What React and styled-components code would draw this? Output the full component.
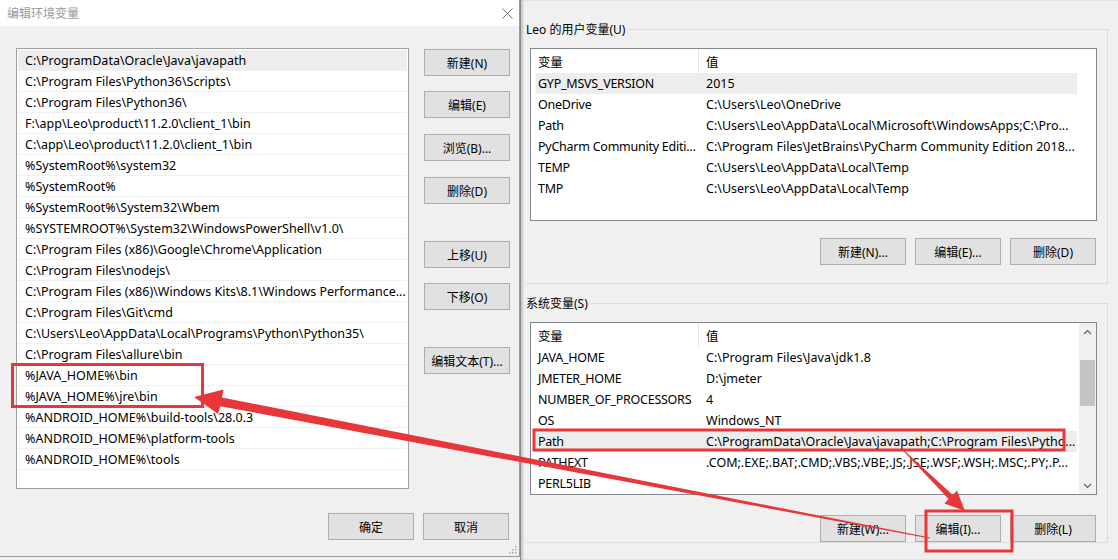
import React from 'react';
import styled, { createGlobalStyle } from 'styled-components';

const GlobalStyle = createGlobalStyle`
  html, body {
    margin: 0;
    padding: 0;
    background: #f0f0f0;
  }
  body {
    font-family: "Noto Sans", "Noto Sans CJK SC", sans-serif;
    font-size: 12px;
    color: #000;
  }
`

const pathItems = [
  'C:\\ProgramData\\Oracle\\Java\\javapath',
  'C:\\Program Files\\Python36\\Scripts\\',
  'C:\\Program Files\\Python36\\',
  'F:\\app\\Leo\\product\\11.2.0\\client_1\\bin',
  'C:\\app\\Leo\\product\\11.2.0\\client_1\\bin',
  '%SystemRoot%\\system32',
  '%SystemRoot%',
  '%SystemRoot%\\System32\\Wbem',
  '%SYSTEMROOT%\\System32\\WindowsPowerShell\\v1.0\\',
  'C:\\Program Files (x86)\\Google\\Chrome\\Application',
  'C:\\Program Files\\nodejs\\',
  'C:\\Program Files (x86)\\Windows Kits\\8.1\\Windows Performance...',
  'C:\\Program Files\\Git\\cmd',
  'C:\\Users\\Leo\\AppData\\Local\\Programs\\Python\\Python35\\',
  'C:\\Program Files\\allure\\bin',
  '%JAVA_HOME%\\bin',
  '%JAVA_HOME%\\jre\\bin',
  '%ANDROID_HOME%\\build-tools\\28.0.3',
  '%ANDROID_HOME%\\platform-tools',
  '%ANDROID_HOME%\\tools',
]

const sideButtons = [
  { label: '新建(N)', gap: 1 },
  { label: '编辑(E)', gap: 15 },
  { label: '浏览(B)...', gap: 16 },
  { label: '删除(D)', gap: 16 },
  { label: '上移(U)', gap: 37 },
  { label: '下移(O)', gap: 15 },
  { label: '编辑文本(T)...', gap: 37 },
]

const userVars = [
  ['GYP_MSVS_VERSION', '2015', true],
  ['OneDrive', 'C:\\Users\\Leo\\OneDrive'],
  ['Path', 'C:\\Users\\Leo\\AppData\\Local\\Microsoft\\WindowsApps;C:\\Pro...'],
  ['PyCharm Community Editi...', 'C:\\Program Files\\JetBrains\\PyCharm Community Edition 2018...'],
  ['TEMP', 'C:\\Users\\Leo\\AppData\\Local\\Temp'],
  ['TMP', 'C:\\Users\\Leo\\AppData\\Local\\Temp'],
]

const sysVars = [
  ['JAVA_HOME', 'C:\\Program Files\\Java\\jdk1.8'],
  ['JMETER_HOME', 'D:\\jmeter'],
  ['NUMBER_OF_PROCESSORS', '4'],
  ['OS', 'Windows_NT'],
  ['Path', 'C:\\ProgramData\\Oracle\\Java\\javapath;C:\\Program Files\\Pytho...', true],
  ['PATHEXT', '.COM;.EXE;.BAT;.CMD;.VBS;.VBE;.JS;.JSE;.WSF;.WSH;.MSC;.PY;.P...'],
  ['PERL5LIB', ''],
]

function VarTable({ rows, scroll }) {
  return (
    <TableBox>
      <TableContent>
        <HeadRow>
          <NameCell $head>变量</NameCell>
          <ValueCell>值</ValueCell>
        </HeadRow>
        {rows.map(([name, value, active]) => (
          <VarRow key={name} $active={active}>
            <NameCell>{name}</NameCell>
            <ValueCell>{value}</ValueCell>
          </VarRow>
        ))}
      </TableContent>
      {scroll && (
        <ScrollBar>
          <ScrollArrow>
            <svg width="9" height="6" viewBox="0 0 9 6">
              <path d="M1 5 L4.5 1.5 L8 5" fill="none" stroke="#606060" strokeWidth="1.2" />
            </svg>
          </ScrollArrow>
          <ScrollTrack>
            <ScrollThumb />
          </ScrollTrack>
          <ScrollArrow>
            <svg width="9" height="6" viewBox="0 0 9 6">
              <path d="M1 1 L4.5 4.5 L8 1" fill="none" stroke="#606060" strokeWidth="1.2" />
            </svg>
          </ScrollArrow>
        </ScrollBar>
      )}
    </TableBox>
  )
}

export default function App() {
  return (
    <>
      <GlobalStyle />
      <Screen>
        <EditDialog>
          <TitleBar>
            <Title>编辑环境变量</Title>
            <svg width="11" height="11" viewBox="0 0 11 11">
              <path d="M0.5 0.5 L10.5 10.5 M10.5 0.5 L0.5 10.5" stroke="#707070" strokeWidth="1" />
            </svg>
          </TitleBar>
          <DialogBody>
            <PathList>
              {pathItems.map((item, i) => (
                <PathRow key={item} $active={i === 0}>{item}</PathRow>
              ))}
            </PathList>
            <SideColumn>
              {sideButtons.map((b) => (
                <WinButton key={b.label} $gap={b.gap}>{b.label}</WinButton>
              ))}
            </SideColumn>
          </DialogBody>
          <DialogFooter>
            <WinButton>确定</WinButton>
            <WinButton>取消</WinButton>
          </DialogFooter>
          <Grip width="8" height="8" viewBox="0 0 8 8">
            <g fill="#a8a8a8">
              <rect x="6" y="0" width="1.5" height="1.5" />
              <rect x="3" y="3" width="1.5" height="1.5" />
              <rect x="6" y="3" width="1.5" height="1.5" />
              <rect x="0" y="6" width="1.5" height="1.5" />
              <rect x="3" y="6" width="1.5" height="1.5" />
              <rect x="6" y="6" width="1.5" height="1.5" />
            </g>
          </Grip>
        </EditDialog>

        <EnvWindow>
          <Group $pad={18}>
            <Legend>Leo 的用户变量(U)</Legend>
            <VarTable rows={userVars} />
            <ButtonRow $top={17}>
              <WinButton>新建(N)...</WinButton>
              <WinButton>编辑(E)...</WinButton>
              <WinButton>删除(D)</WinButton>
            </ButtonRow>
          </Group>
          <Group $pad={0} $top={11}>
            <Legend>系统变量(S)</Legend>
            <VarTable rows={sysVars} scroll />
            <ButtonRow $top={20}>
              <WinButton>新建(W)...</WinButton>
              <WinButton>编辑(I)...</WinButton>
              <WinButton>删除(L)</WinButton>
            </ButtonRow>
          </Group>
        </EnvWindow>

        <Marks width="1118" height="560" viewBox="0 0 1118 560">
          <g fill="none" stroke="#e8373b" strokeWidth="3">
            <rect x="12.5" y="364.5" width="190" height="42" />
            <rect x="534" y="430" width="530" height="20" />
            <rect x="926" y="511" width="86" height="40" />
          </g>
          <g fill="#e8373b">
            <polygon points="194,397 223.5,389.5 221.9,397.5 930.1,537.5 929.9,538.5 220.3,406.2 218.1,414" />
            <polygon points="965,511 957,490.6 952.8,494.9 902.35,448.64 901.65,449.36 948.6,499.1 944.4,503.4" />
          </g>
        </Marks>
      </Screen>
    </>
  )
}

const Screen = styled.div`
  position: relative;
  width: 1118px;
  height: 560px;
  display: flex;
  overflow: hidden;
  background: #f0f0f0;
`

const EditDialog = styled.div`
  position: relative;
  width: 520px;
  height: 557px;
  flex-shrink: 0;
  display: flex;
  flex-direction: column;
  background: #f0f0f0;
  border-right: 1px solid #9a9a9a;
  border-bottom: 1px solid #9a9a9a;
  box-sizing: border-box;
`

const TitleBar = styled.div`
  height: 26px;
  flex-shrink: 0;
  background: #fff;
  display: flex;
  align-items: center;
  justify-content: space-between;
  padding: 0 6px 0 7px;
`

const Title = styled.span`
  color: #9a9a9a;
  font-size: 12px;
`

const DialogBody = styled.div`
  display: flex;
  align-items: flex-start;
  padding: 22px 0 0 16px;
  gap: 15px;
`

const PathList = styled.div`
  width: 393px;
  height: 441px;
  box-sizing: border-box;
  border: 1px solid #a0a0a0;
  background: #fff;
  padding: 1px;
  overflow: hidden;
`

const PathRow = styled.div`
  height: 21px;
  box-sizing: border-box;
  border-bottom: 1px solid #f0f0f0;
  padding-left: 7px;
  line-height: 21px;
  font-size: 12.5px;
  white-space: nowrap;
  overflow: hidden;
  background: ${(p) => (p.$active ? '#ededed' : '#fff')};
`

const SideColumn = styled.div`
  display: flex;
  flex-direction: column;
`

const WinButton = styled.div`
  width: 86px;
  height: 27px;
  box-sizing: border-box;
  margin-top: ${(p) => p.$gap || 0}px;
  border: 1px solid #adadad;
  background: #e1e1e1;
  display: flex;
  align-items: center;
  justify-content: center;
  font-size: 12px;
  white-space: nowrap;
`

const DialogFooter = styled.div`
  display: flex;
  justify-content: flex-end;
  gap: 9px;
  padding: 24px 10px 0 0;
`

const Grip = styled.svg`
  position: absolute;
  right: 2px;
  bottom: 2px;
`

const EnvWindow = styled.div`
  flex: 1;
  height: 560px;
  box-sizing: border-box;
  border-left: 1px solid #8c8c8c;
  box-shadow: inset 2px 0 2px rgba(0, 0, 0, 0.18);
  padding: 21px 10px 0 5px;
  display: flex;
  flex-direction: column;
`

const Group = styled.fieldset`
  margin: ${(p) => p.$top || 0}px 0 0 0;
  padding: 0 0 ${(p) => p.$pad}px 4px;
  border: 1px solid #dcdcdc;
  border-left: none;
  min-width: 0;
`

const Legend = styled.legend`
  padding: 0 3px 0 0;
  margin-left: -4px;
  height: 17px;
  line-height: 17px;
  font-size: 12px;
`

const ButtonRow = styled.div`
  display: flex;
  justify-content: flex-end;
  gap: 9px;
  margin-top: ${(p) => p.$top}px;
  padding-right: 11px;
`

const TableBox = styled.div`
  margin-top: 10px;
  width: 567px;
  height: 173px;
  box-sizing: border-box;
  border: 1px solid #828790;
  background: #fff;
  display: flex;
  overflow: hidden;
`

const TableContent = styled.div`
  width: 541px;
  margin-left: 5px;
  display: flex;
  flex-direction: column;
  font-size: 12.5px;
`

const HeadRow = styled.div`
  height: 24px;
  flex-shrink: 0;
  display: flex;
  align-items: center;
`

const VarRow = styled.div`
  height: 21px;
  flex-shrink: 0;
  display: flex;
  align-items: center;
  background: ${(p) => (p.$active ? '#ededed' : 'transparent')};
`

const NameCell = styled.div`
  width: 163px;
  height: 100%;
  flex-shrink: 0;
  box-sizing: border-box;
  padding-left: 2px;
  display: flex;
  align-items: center;
  white-space: nowrap;
  overflow: hidden;
  letter-spacing: -0.25px;
  border-right: 1px solid ${(p) => (p.$head ? '#e5e5e5' : 'transparent')};
`

const ValueCell = styled.div`
  flex: 1;
  min-width: 0;
  padding-left: 7px;
  white-space: nowrap;
  overflow: hidden;
`

const ScrollBar = styled.div`
  width: 17px;
  margin-left: 2px;
  background: #f0f0f0;
  display: flex;
  flex-direction: column;
`

const ScrollArrow = styled.div`
  height: 17px;
  flex-shrink: 0;
  display: flex;
  align-items: center;
  justify-content: center;
`

const ScrollTrack = styled.div`
  flex: 1;
  padding-top: 20px;
`

const ScrollThumb = styled.div`
  height: 46px;
  margin: 0 1px;
  background: #c4c4c4;
`

const Marks = styled.svg`
  position: absolute;
  top: 0;
  left: 0;
  pointer-events: none;
`
